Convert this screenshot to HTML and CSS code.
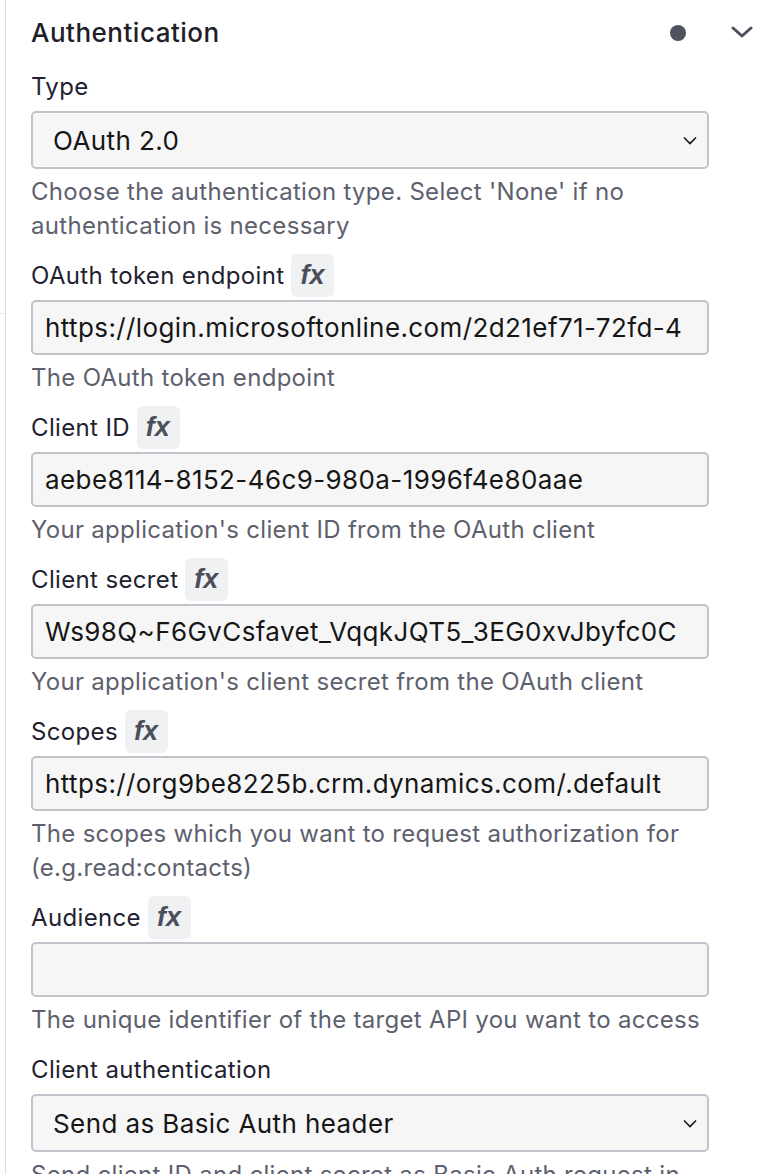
FILE: index.html
```html
<!DOCTYPE html>
<html>
<head>
<meta charset="utf-8">
<link rel="stylesheet" href="styles.css">
</head>
<body>
<div class="layout">
  <div class="strip"><div class="strip-top"></div></div>
  <div class="panel">
    <div class="header">
      <div class="title">Authentication</div>
      <div class="header-icons">
        <span class="dot"></span>
        <svg class="collapse" width="22" height="14" viewBox="0 0 22 14"><path d="M2 3 L11 11 L20 3" fill="none" stroke="#4d505c" stroke-width="3" stroke-linecap="round" stroke-linejoin="round"/></svg>
      </div>
    </div>

    <div class="field">
      <div class="label-row"><span class="label">Type</span></div>
      <div class="select"><span class="value">OAuth 2.0</span><svg class="caret" width="14" height="9" viewBox="0 0 14 9"><path d="M1 1.5 L7 7.5 L13 1.5" fill="none" stroke="#161616" stroke-width="1.6"/></svg></div>
      <div class="help">Choose the authentication type. Select 'None' if no authentication is necessary</div>
    </div>

    <div class="field">
      <div class="label-row"><span class="label">OAuth token endpoint</span><span class="fx">fx</span></div>
      <div class="input"><span class="value">https://login.microsoftonline.com/2d21ef71-72fd-4</span></div>
      <div class="help">The OAuth token endpoint</div>
    </div>

    <div class="field">
      <div class="label-row"><span class="label">Client ID</span><span class="fx">fx</span></div>
      <div class="input"><span class="value">aebe8114-8152-46c9-980a-1996f4e80aae</span></div>
      <div class="help">Your application's client ID from the OAuth client</div>
    </div>

    <div class="field">
      <div class="label-row"><span class="label">Client secret</span><span class="fx">fx</span></div>
      <div class="input"><span class="value">Ws98Q~F6GvCsfavet_VqqkJQT5_3EG0xvJbyfc0C</span></div>
      <div class="help">Your application's client secret from the OAuth client</div>
    </div>

    <div class="field">
      <div class="label-row"><span class="label">Scopes</span><span class="fx">fx</span></div>
      <div class="input"><span class="value">https://org9be8225b.crm.dynamics.com/.default</span></div>
      <div class="help">The scopes which you want to request authorization for (e.g.read:contacts)</div>
    </div>

    <div class="field">
      <div class="label-row"><span class="label">Audience</span><span class="fx">fx</span></div>
      <div class="input"><span class="value"></span></div>
      <div class="help">The unique identifier of the target API you want to access</div>
    </div>

    <div class="field">
      <div class="label-row"><span class="label">Client authentication</span></div>
      <div class="select"><span class="value">Send as Basic Auth header</span><svg class="caret" width="14" height="9" viewBox="0 0 14 9"><path d="M1 1.5 L7 7.5 L13 1.5" fill="none" stroke="#161616" stroke-width="1.6"/></svg></div>
      <div class="help">Send client ID and client secret as Basic Auth request in the header</div>
    </div>
  </div>
</div>
</body>
</html>
```

FILE: styles.css
```css
* { box-sizing: border-box; }
html, body { margin: 0; padding: 0; background: #ffffff; }
body {
  font-family: "Inter", "Noto Sans", sans-serif;
  color: #1f2230;
  overflow: hidden;
  height: 1174px;
}
.layout { display: flex; height: 1174px; }
.strip { width: 5px; flex: none; }
.strip-top { height: 314px; border-bottom: 1px solid #e6e6e6; }
.panel {
  flex: 1;
  border-left: 1px solid #dedede;
  padding-left: 25px;
  padding-right: 21px;
}
.header {
  height: 65px;
  display: flex;
  align-items: center;
  justify-content: space-between;
}
.title { font-size: 26px; font-weight: 500; color: #1e2029; letter-spacing: 0.5px; }
.header-icons { display: flex; align-items: center; gap: 45px; padding-top: 1px; }
.dot { width: 16px; height: 16px; border-radius: 50%; background: #50535f; display: block; }
.collapse { display: block; margin-top: -2px; }
.field { width: 678px; margin-bottom: 11px; }
.label-row { height: 43px; display: flex; align-items: center; gap: 7px; }
.label { font-size: 24px; color: #1f2230; letter-spacing: 0.35px; }
.fx {
  width: 43px; height: 43px; border-radius: 6px; background: #f0f1f3;
  display: flex; align-items: center; justify-content: center;
  font-family: "Liberation Sans", sans-serif; font-style: italic; font-weight: 700;
  font-size: 27px; color: #4b4f5c; padding-right: 1px;
}
.input, .select {
  margin-top: 3px;
  border: 2px solid #c2c4cb;
  border-radius: 5px;
  background: #f6f6f6;
  display: flex; align-items: center;
  overflow: hidden;
  white-space: nowrap;
}
.input { height: 55px; padding-left: 12px; }
.select { height: 58px; padding-left: 20px; padding-right: 10px; justify-content: space-between; }
.value { font-size: 26px; color: #161616; letter-spacing: 0.4px; }
.caret { display: block; flex: none; }
.help {
  margin-top: 6px;
  font-size: 24px;
  line-height: 34px;
  color: #5d616e;
  letter-spacing: 0.3px;
}
```
